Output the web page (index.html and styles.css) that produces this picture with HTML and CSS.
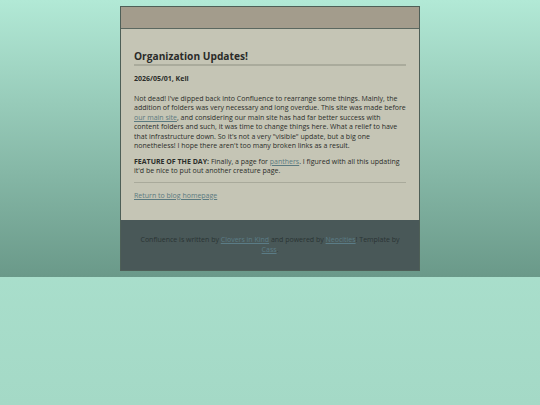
FILE: index.html
```html
<!DOCTYPE html>
<html lang="en">
<head>
  <meta charset="UTF-8">
  <meta name="viewport" content="width=device-width, initial-scale=1.0">
  <title>Organization Updates! - Confluence</title>
  <link rel="stylesheet" href="styles.css">
</head>
<body>
  <div class="container">
    <!-- Bandeau du haut -->
    <div class="header"></div>

    <!-- Article -->
    <div class="main">
      <h1>Organization Updates!</h1>
      <p class="date">2026/05/01, Kell</p>

      <p>Not dead! I've dipped back into Confluence to rearrange some things. Mainly, the addition of folders was very necessary and long overdue. This site was made before <a href="#">our main site</a>, and considering our main site has had far better success with content folders and such, it was time to change things here. What a relief to have that infrastructure down. So it's not a very "visible" update, but a big one nonetheless! I hope there aren't too many broken links as a result.</p>

      <p><b>FEATURE OF THE DAY:</b> Finally, a page for <a href="#">panthers</a>. I figured with all this updating it'd be nice to put out another creature page.</p>

      <hr>

      <a href="#" class="back">Return to blog homepage</a>
    </div>

    <div class="footer">
      Confluence is written by <a href="#">Clovers in Kind</a> and powered by <a href="#">Neocities</a>! Template by <a href="#">Cass</a>.
    </div>
  </div>
</body>
</html>
```

FILE: styles.css
```css
html {
  background: linear-gradient(to bottom, #b2e9d6, #a4d9c6);
  min-height: 100%;
}

body {
  margin: 0;
  padding: 6px 0;
  font-family: "Open Sans", Arial, sans-serif;
  font-size: 7px;
  color: #2b2d2a;
  background: linear-gradient(to bottom, #b2e9d6, #6a9989);
}

.container {
  width: 298px;
  margin: 0 auto;
  border: 1px solid #4e5f57;
}

.header {
  height: 21px;
  background-color: #a39c8c;
  border-bottom: 1px solid #5b6860;
}

.main {
  background-color: #c5c5b5;
  padding: 20px 13px 20px 13px;
  line-height: 9.5px;
}

h1 {
  margin: 0 0 8px 0;
  font-size: 10.2px;
  line-height: 14px;
  font-weight: bold;
  color: #2a2b29;
  border-bottom: 2px solid #aaab9c;
  padding-bottom: 1px;
}

.date {
  font-weight: bold;
  margin: 0 0 10px 0;
}

p {
  margin: 0 0 6px 0;
}

a {
  color: #5b7a80;
}

hr {
  border: none;
  border-top: 1px solid #a9aa9b;
  margin: 6px 0 8px 0;
}

.footer {
  background-color: #495858;
  color: #2a3434;
  text-align: center;
  padding: 15px 12px;
  line-height: 10px;
}

.footer a {
  color: #5b7c86;
}
```
